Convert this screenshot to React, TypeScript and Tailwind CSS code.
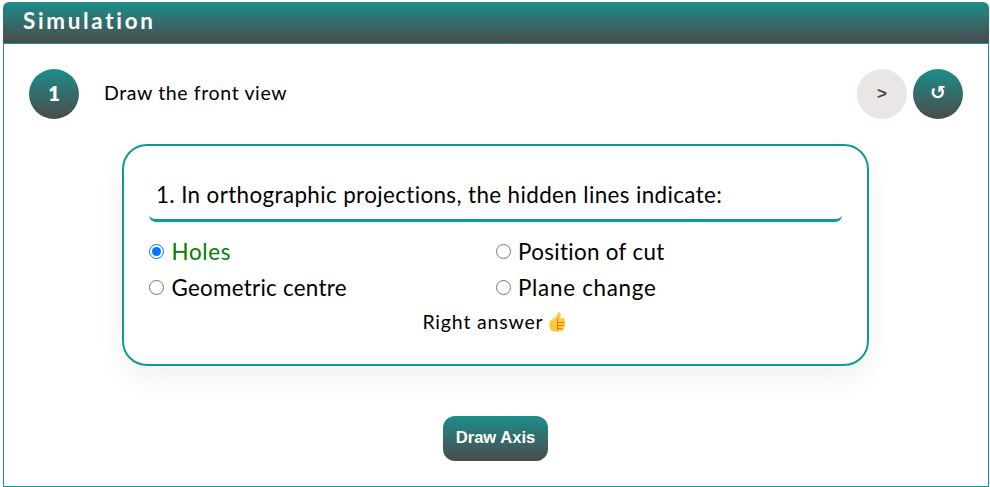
import { useState } from "react";

const options = [
  { label: "Holes", tracking: "tracking-[0.65px]" },
  { label: "Position of cut", tracking: "tracking-[0.32px]" },
  { label: "Geometric centre", tracking: "tracking-[0.26px]" },
  { label: "Plane change", tracking: "tracking-[0.72px]" },
];

function ThumbUp() {
  return (
    <svg className="ml-[5px] h-5 w-[17px] shrink-0" viewBox="0 0 17 20" role="img" aria-label="Thumbs up">
      <path
        d="M9.2 0.7C9.6 0 11.7 0.2 11.8 1.8C11.9 3.4 11.3 4.8 11 6H14C15.6 6 16.2 7.3 15.6 8.4C16.3 9.2 16.3 10.4 15.7 11.2C16.2 12.1 16.1 13.3 15.4 14C15.7 15 15.4 16 14.7 16.6C14.8 18.3 13.8 19.6 12 19.6H6.2C2.7 19.6 0.5 17.4 0.5 14.2V11.5C0.5 9.4 1.8 8 3.4 7.3C6.2 6 8.2 3.6 9.2 0.7Z"
        fill="#ffc83d"
      />
      <path d="M8.5 6.7V18.4M8.5 10.5H15.2M8.5 13.5H15M8.5 16.5H13.5" stroke="#d67d00" strokeWidth="0.9" fill="none" />
    </svg>
  );
}

export default function App() {
  const [picked, setPicked] = useState(0);
  return (
    <div className="h-[487px] w-[990px] overflow-hidden bg-white pl-[3px] pt-[2px] font-[Lato,'Open_Sans',sans-serif] text-black [font-variant-ligatures:none]">
      <div className="flex h-[485px] w-[986px] flex-col">
        <header className="flex h-[41px] shrink-0 items-center rounded-t-[6px] bg-linear-to-b/srgb from-[#1c8d8b] to-[#4b4b4b] pl-5 pb-[2px]">
          <h1 className="text-[22.4px] leading-none font-bold tracking-[2.7px] text-white">Simulation</h1>
        </header>
        <main className="flex min-h-0 flex-1 flex-col items-center border border-[#0e9a92] pt-[25px] pr-[2px]">
          <div className="flex w-full items-center pl-[25px] pr-[23px]">
            <div className="flex h-[50px] w-[50px] items-center justify-center rounded-full bg-linear-to-b/srgb from-[#1c8d8b] to-[#4b4b4b] pb-[2px] text-[20px] font-extrabold text-white">
              1
            </div>
            <p className="ml-[25px] pb-[3px] text-[19.5px] leading-7 tracking-[0.62px]">Draw the front view</p>
            <button className="ml-auto h-[50px] w-[50px] rounded-full bg-[#ebe6e6] font-['Liberation_Sans',Arial,sans-serif] text-[17px] font-bold text-[#444]">
              &gt;
            </button>
            <button className="ml-[6px] h-[50px] w-[50px] rounded-full bg-linear-to-b/srgb from-[#1c8d8b] to-[#4b4b4b] pb-[3px] font-['DejaVu_Sans',sans-serif] text-[19px] leading-none font-bold text-white">
              ↺
            </button>
          </div>

          <section className="mt-[25px] flex h-[222px] w-[747px] shrink-0 flex-col rounded-[25px] border-2 border-[#0e9a92] bg-white px-[25px] pt-[24px] shadow-[0_12px_28px_rgba(0,0,0,0.06)]">
            <h2 className="h-[52px] shrink-0 rounded-[7px] border-b-[3px] border-[#0e9a92] pl-[7.5px] pt-[9px] text-[22.4px] leading-8 tracking-[0.38px] whitespace-nowrap">
              1. In orthographic projections, the hidden lines indicate:
            </h2>
            <div className="mt-[11px] grid grid-cols-2">
              {options.map(({ label, tracking }, i) => (
                <label key={label} className={`flex h-9 items-center text-[22.4px] ${i === picked ? "text-[#008000]" : ""}`}>
                  <input
                    type="radio"
                    name="answer"
                    checked={picked === i}
                    onChange={() => setPicked(i)}
                    className="mr-[7.4px] ml-[0.6px] h-[15px] w-[15px]"
                  />
                  <span className={`pt-[2px] ${tracking}`}>{label}</span>
                </label>
              ))}
            </div>
            <p className="flex h-[34px] items-center justify-center pr-[2px] text-[19.5px] tracking-[0.82px]">
              <span>Right answer</span>
              <ThumbUp />
            </p>
          </section>

          <button className="mt-[50px] h-[45px] w-[105px] shrink-0 rounded-[12px] bg-linear-to-b/srgb from-[#1c8d8b] to-[#4b4b4b] pb-[1px] pl-px font-['Liberation_Sans',Arial,sans-serif] text-[16.6px] font-bold whitespace-nowrap text-white">
            Draw Axis
          </button>
        </main>
      </div>
    </div>
  );
}
